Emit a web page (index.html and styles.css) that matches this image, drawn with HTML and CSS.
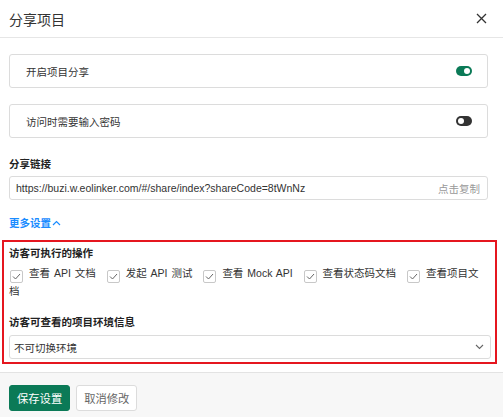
FILE: index.html
```html
<!DOCTYPE html>
<html lang="zh">
<head>
<meta charset="utf-8">
<title>分享项目</title>
<link rel="stylesheet" href="styles.css">
</head>
<body>
<div class="dialog">
  <div class="header">
    <span class="title">分享项目</span>
    <svg class="close" width="11" height="11" viewBox="0 0 11 11"><path d="M1 1L10 10M10 1L1 10" stroke="#333" stroke-width="1.3" fill="none"/></svg>
  </div>
  <div class="content">
    <div class="card">
      <span>开启项目分享</span>
      <span class="toggle on"><span class="knob"></span></span>
    </div>
    <div class="card">
      <span>访问时需要输入密码</span>
      <span class="toggle off"><span class="knob"></span></span>
    </div>
    <div class="label">分享链接</div>
    <div class="input">
      <span class="url">https://buzi.w.eolinker.com/#/share/index?shareCode=8tWnNz</span>
      <span class="copy">点击复制</span>
    </div>
    <div class="more">更多设置<svg width="9" height="6" viewBox="0 0 9 6"><path d="M1 5L4.5 1.5L8 5" stroke="#1a8cff" stroke-width="1.2" fill="none"/></svg></div>
    <div class="highlight">
      <div class="label tight">访客可执行的操作</div>
      <div class="checks"><span class="check"><span class="box"><svg width="9" height="7" viewBox="0 0 9 7"><path d="M1 3.5L3.5 6L8 1" stroke="#666" stroke-width="1" fill="none"/></svg></span>查看 API 文档</span> <span class="check"><span class="box"><svg width="9" height="7" viewBox="0 0 9 7"><path d="M1 3.5L3.5 6L8 1" stroke="#666" stroke-width="1" fill="none"/></svg></span>发起 API 测试</span> <span class="check"><span class="box"><svg width="9" height="7" viewBox="0 0 9 7"><path d="M1 3.5L3.5 6L8 1" stroke="#666" stroke-width="1" fill="none"/></svg></span>查看 Mock API</span> <span class="check"><span class="box"><svg width="9" height="7" viewBox="0 0 9 7"><path d="M1 3.5L3.5 6L8 1" stroke="#666" stroke-width="1" fill="none"/></svg></span>查看状态码文档</span> <span class="check"><span class="box"><svg width="9" height="7" viewBox="0 0 9 7"><path d="M1 3.5L3.5 6L8 1" stroke="#666" stroke-width="1" fill="none"/></svg></span>查看项目文档</span></div>
      <div class="label env">访客可查看的项目环境信息</div>
      <div class="select">
        <span>不可切换环境</span>
        <svg width="9" height="6" viewBox="0 0 9 6"><path d="M1 1L4.5 4.5L8 1" stroke="#666" stroke-width="1.1" fill="none"/></svg>
      </div>
    </div>
  </div>
  <div class="footer">
    <button class="btn primary">保存设置</button>
    <button class="btn">取消修改</button>
  </div>
</div>
</body>
</html>
```
FILE: styles.css
```css
html, body {
  margin: 0;
  padding: 0;
  background: #fff;
}
body {
  font-family: "Liberation Sans", "Noto Sans CJK SC", sans-serif;
  font-size: 10.5px;
  color: #333;
}
.dialog {
  width: 503px;
  height: 417px;
  display: flex;
  flex-direction: column;
}
.header {
  height: 37px;
  border-bottom: 1px solid #e6e6e6;
  padding: 0 16px 0 9px;
  display: flex;
  align-items: center;
  justify-content: space-between;
}
.title {
  font-size: 14px;
  color: #333;
}
.content {
  padding: 16px 15px 0 9px;
  flex: 1;
}
.card {
  height: 32px;
  border: 1px solid #dcdcdc;
  border-radius: 3px;
  padding: 0 15px 0 16px;
  display: flex;
  align-items: center;
  justify-content: space-between;
  margin-bottom: 16px;
  color: #333;
}
.toggle {
  width: 16px;
  height: 10px;
  border-radius: 5px;
  position: relative;
  display: inline-block;
}
.toggle.on { background: #0b7a57; }
.toggle.off { background: #333; }
.knob {
  position: absolute;
  top: 2px;
  width: 6px;
  height: 6px;
  border-radius: 50%;
  background: #fff;
}
.toggle.on .knob { right: 2px; }
.toggle.off .knob { left: 2px; }
.label {
  font-weight: bold;
  line-height: 16px;
  margin-top: 18px;
  margin-bottom: 4px;
  color: #222;
}
.input {
  height: 22px;
  border: 1px solid #dcdcdc;
  border-radius: 3px;
  padding: 0 7px 0 6px;
  display: flex;
  align-items: center;
  justify-content: space-between;
}
.url { color: #333; }
.copy { color: #999; }
.more {
  color: #1a8cff;
  font-weight: bold;
  line-height: 16px;
  margin-top: 15px;
  display: flex;
  align-items: center;
  gap: 1px;
}
.highlight {
  margin: 9px -9px 0 -7px;
  border: 2px solid #e5161f;
  padding: 3px 4px 3px 5px;
}
.label.tight { margin-top: 0; }
.checks {
  line-height: 16px;
  color: #333;
  word-spacing: 1px;
}
.check {
  margin-right: 6px;
}
.box {
  display: inline-flex;
  align-items: center;
  justify-content: center;
  width: 11px;
  height: 11px;
  border: 1px solid #c8c8c8;
  border-radius: 2px;
  margin: 0 6px 0 1px;
  vertical-align: -3px;
  background: #fff;
}
.label.env {
  margin-top: 15px;
  margin-bottom: 5px;
}
.select {
  height: 22px;
  border: 1px solid #dcdcdc;
  border-radius: 3px;
  padding: 0 6px 0 4px;
  display: flex;
  align-items: center;
  justify-content: space-between;
}
.footer {
  border-top: 1px solid #e3e3e3;
  background: #f7f7f7;
  height: 45px;
  padding: 12px 9px 0;
  box-sizing: border-box;
  display: flex;
  align-items: flex-start;
  gap: 6px;
}
.btn {
  font-family: "Liberation Sans", "Noto Sans CJK SC", sans-serif;
  font-size: 11.3px;
  height: 26px;
  padding: 0 7px;
  border: 1px solid #dcdcdc;
  border-radius: 3px;
  background: #fff;
  color: #666;
}
.btn.primary {
  background: #0b7a57;
  border-color: #0b7a57;
  color: #fff;
}
```
